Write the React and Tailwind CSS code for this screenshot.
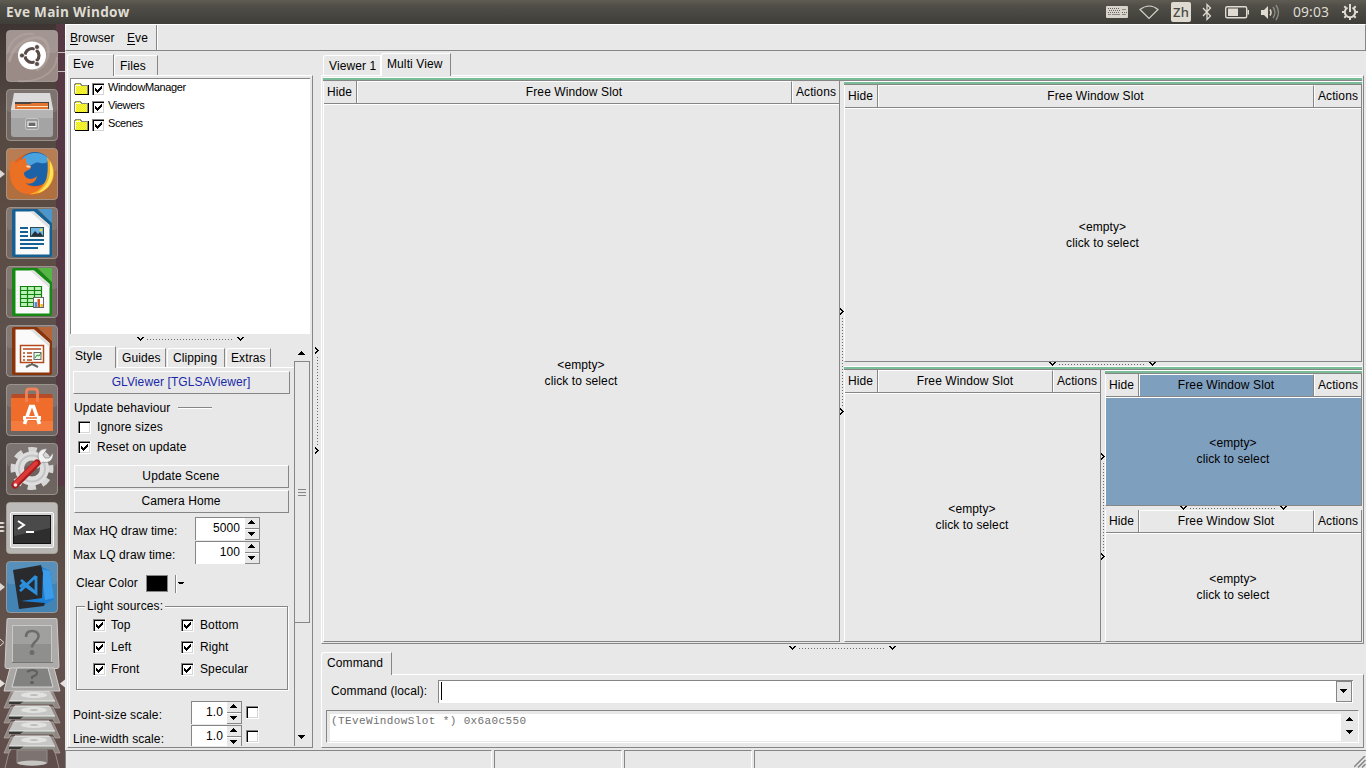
import React from "react";

const GRAY = "border-[#868686]";

/* ---------- small glyphs ---------- */

function ChevronDown() {
  return (
    <svg width="8" height="5" viewBox="0 0 8 5" shapeRendering="crispEdges">
      <path d="M0 0h2v1h1v1h1v-1h1v-1h2v1h-1v1h-1v1h-1v1h-1v-1h-1v-1h-1v-1h-1z" fill="#000" />
    </svg>
  );
}

function ChevronRight() {
  return (
    <svg width="4" height="8" viewBox="0 0 4 8" className="shrink-0" shapeRendering="crispEdges">
      <path d="M0 0h1v1h1v1h1v1h1v1h-1v1h-1v1h-1v1h-1v-2h1v-1h1v-1h-1v-1h-1z" fill="#000" />
    </svg>
  );
}

function Triangle({ up = false, small = false }) {
  const d = up ? "M3 0h1v1h1v1h1v1h1v1h-7v-1h1v-1h1v-1h1z" : "M0 0h7v1h-1v1h-1v1h-1v1h-1v-1h-1v-1h-1v-1h-1z";
  return (
    <svg width={small ? 6 : 7} height={small ? 3 : 4} viewBox="0 0 7 4" preserveAspectRatio="none" shapeRendering="crispEdges" className="shrink-0">
      <path d={d} fill="#000" />
    </svg>
  );
}

/* Horizontal splitter grip: two chevrons joined by a dotted line */
function HGrip() {
  return (
    <div className="flex h-[5px] w-[108px] items-start">
      <ChevronDown />
      <svg width="92" height="5" shapeRendering="crispEdges">
        <path d="M2 2.500H89" stroke="#6a6a6a" strokeDasharray="1 2" />
      </svg>
      <ChevronDown />
    </div>
  );
}

function VGrip() {
  return (
    <div className="flex h-[108px] w-[4px] flex-col">
      <ChevronRight />
      <svg width="4" height="92" shapeRendering="crispEdges">
        <path d="M2.500 2V90" stroke="#6a6a6a" strokeDasharray="1 2" />
      </svg>
      <ChevronRight />
    </div>
  );
}

function Check({ on = false }) {
  return (
    <span className="flex h-[13px] w-[13px] shrink-0 border-b border-r border-white">
      <span className="flex h-[12px] w-[12px] border-l border-t border-[#868686]">
        <span className="flex h-[11px] w-[11px] border-l border-t border-black bg-white">
          <span className="flex h-[10px] w-[10px] border-b border-r border-[#d5d5d5]">
            {on && (
              <svg width="9" height="9" viewBox="0 0 9 9" shapeRendering="crispEdges">
                <path d="M1 3h1v1h1v1h1v-1h1v-1h1v-1h1v-1h1v3h-1v1h-1v1h-1v1h-1v1h-1v-1h-1v-1h-1z" fill="#000" />
              </svg>
            )}
          </span>
        </span>
      </span>
    </span>
  );
}

function Folder() {
  return (
    <svg width="16" height="14" viewBox="0 0 16 14" shapeRendering="crispEdges">
      <defs>
        <pattern id="dither" width="2" height="2" patternUnits="userSpaceOnUse">
          <path d="M0 0h2v2h-2z" fill="#ffff00" />
          <path d="M0 0h1v1h-1zM1 1h1v1h-1z" fill="#e4e05a" />
        </pattern>
      </defs>
      <path d="M14.500 3v9.500H1" stroke="#000" fill="none" />
      <path d="M0 3h1V2h1V1h5v1h1v1h6v9H0z" fill="url(#dither)" />
      <path d="M.500 12V2.500h1v-1h5v1h1v1h6V12" stroke="#8a8a78" fill="none" />
      <path d="M1.500 11V3.500H7" stroke="#fdfdd8" fill="none" />
    </svg>
  );
}

/* ---------- window slots ---------- */

function GreenBar() {
  return <div className="h-[4px] w-full shrink-0 border-b border-t border-b-[#868686] border-t-white bg-[#7abb98]" />;
}

function Slot({ active = false, className = "" }) {
  const bg = active ? "bg-[#7f9fbf]" : "bg-[#e8e8e8]";
  return (
    <div className={"flex min-h-0 flex-col border-b border-l border-r border-b-[#868686] border-l-white border-r-[#868686] " + className}>
      <div className={"flex h-[23px] shrink-0 border-b leading-[22px] " + GRAY}>
        <div className={"w-[33px] border-r pl-[3px] " + GRAY}>Hide</div>
        <div className={"flex-1 border-l border-r border-t border-l-white border-r-[#868686] border-t-white pr-px text-center leading-[20px] " + bg}>Free Window Slot</div>
        <div className="w-[47px] border-l border-white text-center">Actions</div>
      </div>
      <div className={"flex flex-1 flex-col items-center justify-center border-t border-white pb-px pr-px text-center leading-[16px] " + bg}>
        <div>&lt;empty&gt;</div>
        <div>click to select</div>
      </div>
    </div>
  );
}

/* ---------- left panel controls ---------- */

function Button({ children, className = "" }) {
  return (
    <div className={"flex h-[23px] items-center justify-center border border-b-[#868686] border-l-white border-r-[#868686] border-t-white pb-[2px] pr-px " + className}>
      {children}
    </div>
  );
}

function Tab({ children, className = "" }) {
  return (
    <div className={"shrink-0 rounded-tl-[3px] border-l border-r border-t border-l-white border-r-[#868686] border-t-white bg-[#e8e8e8] " + className}>
      {children}
    </div>
  );
}

function Spinner({ value, entry }) {
  return (
    <div className="flex h-[23px]">
      <div className={"border-l border-t bg-white text-right leading-[20px] " + GRAY + " " + entry}>{value}</div>
      <div className={"flex w-[15px] flex-col border-r border-t " + GRAY}>
        <div className={"flex h-[11px] justify-center border-b pr-px pt-[2px] " + GRAY}><Triangle up /></div>
        <div className="flex h-[11px] justify-center border-b border-t border-b-[#868686] border-t-white pr-px pt-[2px]"><Triangle /></div>
      </div>
    </div>
  );
}

function Option({ on, children, className = "" }) {
  return (
    <div className={"flex items-center " + className}>
      <Check on={on} />
      <span className="ml-[6px]">{children}</span>
    </div>
  );
}

function StylePage() {
  return (
    <div className="h-[379px] w-[225px] overflow-hidden border-l border-t border-white pl-[3px] pt-[3px]">
      <Button className="w-[217px] text-[#1a28a8]">GLViewer [TGLSAViewer]</Button>
      <div className="mt-[5px] flex h-[18px] items-center pl-px">
        <span className="w-[104px]">Update behaviour</span>
        <span className="h-[2px] w-[34px] border-b border-t border-b-white border-t-[#868686]" />
      </div>
      <Option className="h-[20px] pl-[5px]">Ignore sizes</Option>
      <Option on className="h-[20px] pl-[5px]">Reset on update</Option>
      <Button className="ml-px mt-[8px] w-[215px]">Update Scene</Button>
      <Button className="ml-px mt-[2px] w-[215px]">Camera Home</Button>
      <div className="mt-[4px] flex">
        <span className="w-[122px] pt-[6px]">Max HQ draw time:</span>
        <Spinner value="5000" entry="w-[50px] pr-[5px]" />
      </div>
      <div className="mt-px flex">
        <span className="w-[122px] pt-[6px]">Max LQ draw time:</span>
        <Spinner value="100" entry="w-[50px] pr-[5px]" />
      </div>
      <div className="mt-[10px] flex h-[19px] items-center pl-[3px]">
        <span className="w-[70px] pb-[2px]">Clear Color</span>
        <span className={"h-[17px] w-[22px] border bg-black " + GRAY} />
        <span className="ml-[7px] h-[18px] w-[2px] border-l border-r border-l-[#868686] border-r-white" />
        <span className="ml-px flex"><Triangle small /></span>
      </div>
      <div className="relative ml-[3px] mt-[13px] h-[84px] w-[212px] border border-[#868686] pt-[7px] shadow-[1px_1px_0_white,inset_1px_1px_0_white]">
        <span className="absolute -top-[8px] left-[8px] whitespace-nowrap bg-[#e8e8e8] px-[2px] leading-[14px]">Light sources:</span>
        {[["Top", "Bottom"], ["Left", "Right"], ["Front", "Specular"]].map(([a, b]) => (
          <div key={a} className="flex h-[22px] pl-[16px]">
            <Option on className="w-[88px] [&>span:last-child]:ml-[5px]">{a}</Option>
            <Option on>{b}</Option>
          </div>
        ))}
      </div>
      {["Point-size scale:", "Line-width scale:"].map((label, i) => (
        <div key={label} className={i ? "mt-px flex" : "mt-[11px] flex"}>
          <span className="w-[118px] pt-[6px]">{label}</span>
          <Spinner value="1.0" entry="w-[36px] pr-[4px]" />
          <span className="ml-[4px] mt-[5px]"><Check /></span>
        </div>
      ))}
    </div>
  );
}

function LeftPanel() {
  return (
    <div className="flex w-[248px] shrink-0 flex-col pl-[2px] pt-[3px]">
      <div className="flex h-[21px] items-end">
        <Tab className="z-10 -mb-px h-[22px] w-[47px] pl-[5px] leading-[18px]">Eve</Tab>
        <Tab className="h-[20px] w-[44px] pl-[5px] leading-[20px]">Files</Tab>
      </div>
      <div className="h-[673px] w-[246px] border border-b-[#868686] border-l-white border-r-[#868686] border-t-white pl-[2px] pt-[2px]">
        <div className={"h-[256px] w-[240px] border-l border-t bg-white " + GRAY}>
          {["WindowManager", "Viewers", "Scenes"].map((t) => (
            <div key={t} className="flex h-[18px] pl-[3px] text-[11px] leading-[17px] tracking-[-0.36px]">
              <span className="mt-[3px]"><Folder /></span>
              <span className="ml-[2px] mt-[4px]"><Check on /></span>
              <span className="ml-[3px]">{t}</span>
            </div>
          ))}
        </div>
        <div className="flex h-[12px] justify-center pt-[3px]"><HGrip /></div>
        <div className="-ml-px flex h-[400px]">
          <div className="w-[225px]">
            <div className="flex h-[21px] items-end">
              <Tab className="z-10 -mb-px h-[22px] w-[47px] pl-[5px] leading-[19px]">Style</Tab>
              <Tab className="ml-px h-[19px] w-[49px] pl-[4px] leading-[18px]">Guides</Tab>
              <Tab className="ml-px h-[19px] w-[58px] pl-[5px] leading-[18px]">Clipping</Tab>
              <Tab className="ml-px h-[19px] w-[45px] pl-[4px] leading-[18px]">Extras</Tab>
            </div>
            <StylePage />
          </div>
          <div className="flex w-[16px] flex-col items-center">
            <div className="flex h-[15px] w-full justify-center pr-px pt-[5px]"><Triangle up /></div>
            <div className={"flex h-[262px] w-full flex-col items-center justify-center gap-[2px] border " + GRAY}>
              <span className="h-px w-[8px] bg-[#868686]" />
              <span className="h-px w-[8px] bg-[#868686]" />
              <span className="h-px w-[8px] bg-[#868686]" />
            </div>
            <div className={"flex w-full flex-1 items-end justify-center border-l pb-[7px] pr-[2px] " + GRAY}><Triangle /></div>
          </div>
        </div>
      </div>
    </div>
  );
}

/* ---------- right side ---------- */

function MultiView() {
  return (
    <div className="h-[569px] w-[1043px] border border-b-[#868686] border-l-white border-r-[#868686] border-t-white pl-px pr-px pt-px">
      <GreenBar />
      <div className="flex h-[561px]">
        <Slot className="w-[517px] shrink-0" />
        <div className="flex w-[4px] shrink-0 items-start pt-[227px]"><VGrip /></div>
        <div className="flex w-[519px] flex-col pr-px">
          <GreenBar />
          <Slot className="h-[277px]" />
          <div className="flex h-[4px] justify-center"><HGrip /></div>
          <GreenBar />
          <div className="flex h-[272px]">
            <Slot className="w-[257px]" />
            <div className="flex w-[4px] shrink-0 items-start pt-[83px]"><VGrip /></div>
            <div className="flex w-[257px] flex-col">
              <GreenBar />
              <Slot active className="h-[132px]" />
              <div className="flex h-[4px] justify-center"><HGrip /></div>
              <Slot className="h-[132px]" />
            </div>
          </div>
        </div>
      </div>
    </div>
  );
}

function CommandPanel() {
  return (
    <div>
      <div className="flex h-[22px] items-end">
        <Tab className="z-10 -mb-px h-[23px] w-[71px] pl-[5px] leading-[21px]">Command</Tab>
      </div>
      <div className="h-[74px] w-[1043px] border border-b-[#868686] border-l-white border-r-[#868686] border-t-white pl-[4px] pt-[5px]">
        <div className="flex h-[23px]">
          <span className="w-[112px] pl-[5px] leading-[22px]">Command (local):</span>
          <div className={"flex w-[915px] border-l border-t bg-white pl-[2px] pt-px " + GRAY}>
            <span className="h-[18px] w-px bg-black" />
            <span className="flex-1" />
            <span className={"-mt-px mr-px flex h-[21px] w-[16px] items-center justify-center border bg-[#e8e8e8] pb-px pr-px " + GRAY}><Triangle /></span>
          </div>
        </div>
        <div className="mt-[7px] flex h-[33px] w-[1033px] border border-b-white border-l-[#868686] border-r-white border-t-[#868686] pl-[3px] pt-[3px]">
          <div className="h-[27px] w-[1011px] bg-white pl-px font-['Liberation_Mono',monospace] text-[11px] leading-[15px] tracking-[0.38px] text-[#707070]">
            (TEveWindowSlot *) 0x6a0c550
          </div>
          <div className="flex flex-1 flex-col items-center gap-[9px] pr-px pt-[3px]">
            <Triangle up />
            <Triangle />
          </div>
        </div>
      </div>
    </div>
  );
}

/* ---------- launcher ---------- */

function Tile({ fill = "#8d847f", fillOpacity = 0.5, pip, children }) {
  return (
    <svg width="65" height="59" viewBox="0 0 65 59" className="block shrink-0">
      <rect x="6.500" y=".500" width="51" height="51" rx="3.500" fill={fill} fillOpacity={fillOpacity} stroke="#b9b0aa" strokeOpacity=".65" />
      <rect x="7" y="1" width="50" height="22" rx="3" fill="#fff" fillOpacity=".1" />
      {pip === "one" && <path d="M0 22l5 4-5 4z" fill="#ddd8d4" />}
      {pip === "three" && <path d="M0 20h3l2 1-2 1H0zM0 24h3l2 1-2 1H0zM0 28h3l2 1-2 1H0z" fill="#ddd8d4" />}
      {children}
    </svg>
  );
}

function DocShape({ color, corner, children }) {
  return (
    <>
      <path d="M14 2h23l15 14v32a2 2 0 0 1-2 2H14a2 2 0 0 1-2-2V4a2 2 0 0 1 2-2z" fill={color} />
      <path d="M38 2h14v14z" fill={corner} />
      <path d="M15.500 4.500H34L49.500 18v29.500h-34z" fill="#fafafa" />
      <path d="M34 4.500L49.500 18v4L30 4.500z" fill="#dfdfdf" />
      {children}
    </>
  );
}

function Disk({ y }) {
  return (
    <g>
      <path d={`M11 ${y}H53L60 ${y + 16}h-5l-2-4H11l-2 4H4z`} fill="#8f8581" stroke="#b5aba7" strokeOpacity=".7" />
      <path d={`M14 ${y - 1}h36l5 10H9z`} fill="#c6c6c5" />
      <path d={`M15 ${y - 1}h34`} stroke="#efefee" />
      <ellipse cx="34" cy={y + 3} rx="13" ry="3" fill="#e2e2e1" />
      <ellipse cx="34" cy={y + 3} rx="4" ry="1" fill="#bdbdbc" />
      <path d={`M9 ${y + 9}h46v3H9z`} fill="#363634" />
      <path d={`M24 ${y + 9}h31v3H20z`} fill="#90928c" />
      <path d={`M9 ${y + 9}h46`} stroke="#ececea" />
    </g>
  );
}

function Launcher() {
  return (
    <div className="flex w-[65px] shrink-0 flex-col overflow-hidden bg-[linear-gradient(180deg,#3e3532_0%,#544943_12%,#5b4b42_25%,#5d514d_42%,#4a4340_60%,#5f4f48_74%,#64534e_84%,#5f4d4b_100%)]">
      <div className="flex h-[744px] flex-col bg-[linear-gradient(90deg,transparent_56px,#553844_56px)] bg-[length:100%_462px] bg-no-repeat pt-[6px]">
        <Tile fill="#a3948f" fillOpacity={0.9}>
          <path d="M9 32C14 10 38 2 46 12c6 10 0 24-10 28" stroke="#b8aba5" strokeWidth="3" fill="none" opacity=".6" />
          <path d="M18 51c20 2 38-8 39-24M7 24C11 8 22 3 34 4" stroke="#b8aba5" strokeWidth="2" fill="none" opacity=".5" />
          <circle cx="32" cy="25.500" r="14" fill="#fff" />
          <circle cx="32" cy="25.500" r="7" fill="none" stroke="#594b47" strokeWidth="3.200" />
          <path d="M32 25.500L20 25.500M32 25.500L38 15M32 25.500L38 36" stroke="#fff" strokeWidth="1.500" />
          <circle cx="32" cy="25.500" r="4.800" fill="#fff" />
          <g fill="#594b47" stroke="#fff" strokeWidth=".8"><circle cx="22" cy="25.500" r="2.500" /><circle cx="37" cy="17" r="2.500" /><circle cx="37" cy="34" r="2.500" /></g>
          <path d="M58 22.500h7M58 41.500h7" stroke="#c8c0bd" />
        </Tile>
        <Tile>
          <path d="M14 4h36l3 16H11z" fill="#dadada" />
          <path d="M15 13h34v8H15z" fill="#494542" />
          <path d="M15 15h15l2-1h16v7H15z" fill="#e4752f" />
          <path d="M17 17h31v1H17z" fill="#ffe4c3" />
          <path d="M11 20h42v25q0 3-3 3H14q-3 0-3-3z" fill="#a4a4a4" />
          <path d="M11 20h42v9H11z" fill="#b4b4b4" />
          <path d="M11 20.500h42" stroke="#dcdcdc" />
          <rect x="25.500" y="29.500" width="13" height="11" rx="2" fill="#999" stroke="#c9c9c9" />
          <rect x="28" y="33" width="8" height="4.500" fill="#6a6a6a" stroke="#fff" />
        </Tile>
        <Tile fill="#b5713f" fillOpacity={0.95} pip="one">
          <circle cx="32" cy="26" r="21" fill="#e4601d" />
          <circle cx="35" cy="21" r="17" fill="#1c62a8" />
          <path d="M21 12c5-8 20-10 27-2 1 5-4 6-8 5-6-2-8 4-12 2z" fill="#4aa3df" />
          <path d="M47 9c8 8 9 20 3 28-5 7-13 10-21 9 10-3 17-10 18-18 1-6 1-12 0-19z" fill="#f3a92a" />
          <path d="M50 13c4 8 4 16 0 23-3 5-8 8-13 9 8-5 12-12 13-20z" fill="#ffe45c" />
          <path d="M12 12l4 3c3-3 6-4 10-5 0 3 0 5 2 7 3 0 4 2 2 4-3 2-6 2-6 5 1 5 8 7 13 2-1 7-7 9-12 7 4 5 12 6 18 2-5 8-14 10-20 8-12-4-16-18-11-33z" fill="#ec7023" />
          <path d="M26 18c2-1 4 0 5 1-2 1-4 1-5-1z" fill="#f8e0c8" />
        </Tile>
        <Tile>
          <DocShape color="#156092" corner="#4b96ca">
            <path d="M20 21h8M20 25h8M20 29h8M20 33h24M20 37h24M20 41h18" stroke="#156092" strokeWidth="1.800" />
            <rect x="30.500" y="20.500" width="13" height="9" fill="#6db6e8" stroke="#2d4a55" />
            <path d="M31 29l4-5 3 3 2-2 3 4z" fill="#27313a" /><circle cx="41" cy="23" r="1.500" fill="#e8d348" />
          </DocShape>
        </Tile>
        <Tile>
          <DocShape color="#158a12" corner="#52b743">
            <path d="M20 20h22v20H20z" fill="#baf2b5" />
            <path d="M20.500 20.500h21v20h-21zM20 24.500h22M20 28.500h22M20 32.500h22M20 36.500h22M27.500 20v20M34.500 20v20" stroke="#148012" fill="none" strokeWidth="1.200" />
            <rect x="33.500" y="31.500" width="10" height="10" fill="#fff" stroke="#666" />
            <path d="M34.500 36h2.500v5h-2.500z" fill="#4093d4" /><path d="M37.500 33h2.500v8h-2.500z" fill="#d65321" /><path d="M40.500 38h2.500v3h-2.500z" fill="#f2bd22" />
          </DocShape>
        </Tile>
        <Tile>
          <DocShape color="#8c3409" corner="#b96437">
            <rect x="20.500" y="20.500" width="23" height="17" fill="#fff" stroke="#b4491b" strokeWidth="1.500" />
            <path d="M23 24h18M23 28h2M23 31.500h2M23 35h2M27 28h5M27 31.500h5M27 35h5" stroke="#b4491b" strokeWidth="1.700" />
            <rect x="34" y="27.500" width="7" height="7" fill="#e9f7e9" stroke="#666" /><path d="M35 33l2-3 2 1 2-3" stroke="#27992a" fill="none" />
            <path d="M32 38v2M32 39l-6 3M32 39l6 3" stroke="#666" strokeWidth="2" />
          </DocShape>
        </Tile>
        <Tile>
          <path d="M12 10h40l1 5H11z" fill="#b64b25" />
          <path d="M11 14h42v33H11z" fill="#ef6c2b" />
          <path d="M11 37h42v10H11z" fill="#f47b3d" />
          <path d="M26.500 18V8q0-3 3-3h5q3 0 3 3v10" stroke="#ee8259" strokeWidth="2.800" fill="none" />
          <path d="M24.500 40l6-17.500h3l6 17.500" stroke="#fff" strokeWidth="3.600" fill="none" />
          <path d="M23 32h18v4H23z" fill="#fff" /><path d="M26 34h11" stroke="#ef6c2b" strokeWidth="1.500" />
        </Tile>
        <Tile>
          <circle cx="32" cy="25.500" r="18" fill="none" stroke="#d6d6d6" strokeWidth="7" strokeDasharray="8 6.140" strokeDashoffset="4" />
          <circle cx="32" cy="25.500" r="12.500" fill="none" stroke="#dedede" strokeWidth="9" />
          <circle cx="32" cy="25.500" r="13" fill="none" stroke="#c4c4c4" strokeWidth="2" />
          <path d="M36 24l6-7" stroke="#d8d8d8" strokeWidth="5" />
          <path d="M39 17c-3-7 2-12 8-11l-4 6 2 3 4 0 4-5c1 7-5 11-10 9l-3 2z" fill="#f2f2f2" stroke="#777" strokeWidth=".6" />
          <path d="M15 42L37 20" stroke="#a41c1c" strokeWidth="7" strokeLinecap="round" />
          <path d="M15 41L36 20" stroke="#dc3938" strokeWidth="4" strokeLinecap="round" />
          <circle cx="15.500" cy="42" r="1.800" fill="#eee" />
        </Tile>
        <Tile fill="#bcbab8" fillOpacity={0.95} pip="three">
          <rect x="10.500" y="10.500" width="43" height="35" rx="1.500" fill="#d2d2d2" stroke="#f8f8f8" />
          <rect x="13.500" y="13.500" width="37" height="28" fill="#2e2e2e" stroke="#111" />
          <path d="M14 14h36v12L14 34z" fill="#666" opacity=".5" />
          <path d="M18 19l6 4-6 4" stroke="#fff" strokeWidth="2" fill="none" /><path d="M26 30h8" stroke="#fff" strokeWidth="2" />
        </Tile>
        <Tile fill="#4484b4" fillOpacity={1} pip="one">
          <path d="M40 5l10 5 4 28-11 7-22-6 17-2z" fill="#1d7fd4" />
          <path d="M41 8l9 2 4 27-9 2z" fill="#3b9cec" />
          <path d="M13 9l28-5 2 8-1 25-21 3 24 2-1 3-25 3z" fill="#282a2e" />
          <path d="M36 15v17l-13-9-3 3M36 15L20 30M36 32L21 19" stroke="#2b8fdd" strokeWidth="2.800" fill="none" />
        </Tile>
        <svg width="65" height="148" viewBox="0 620 65 148" className="block shrink-0" overflow="visible">
          <path d="M8 618.500h48q1 0 1 1l2 47q0 2-2 2H7q-2 0-2-2l2-47q0-1 1-1z" fill="#adabaa" stroke="#cdcbc9" />
          <rect x="12.500" y="625.500" width="39" height="37" fill="#8f8f8e" stroke="#c9c9c8" />
          <path d="M13 626h38v18H13z" fill="#a0a09f" />
          <path d="M12 662.500h41" stroke="#747472" />
          <path d="M26 637q0-6 6-6 6.500 0 6.500 5.500c0 5-6.500 5-6.500 11" stroke="#6c6c6a" strokeWidth="2.600" fill="none" />
          <circle cx="32" cy="652.500" r="2.500" fill="#6c6c6a" />
          {[692, 707, 722, 737].map((y) => <Disk key={y} y={y} />)}
          <path d="M10 668h44l6 23H4z" fill="#a8a6a4" stroke="#cfccc9" />
          <path d="M17 668h31l5 19H12z" fill="#828281" stroke="#d5d5d3" />
          <path d="M27 672q6-4 10 0 1 3-5 5v2" stroke="#5f5f5e" strokeWidth="2" fill="none" /><ellipse cx="32" cy="682.500" rx="2" ry="1.500" fill="#5f5f5e" />
          <path d="M9 752l-4 16M55 752l4 16" stroke="#998d89" />
          <path d="M17 750h30v13q-15 5-30 0z" fill="#7d7471" stroke="#968d89" />
          <ellipse cx="32" cy="763" rx="14.500" ry="2.500" fill="#c6c6c3" />
          <path d="M0 639l4 3.500-4 3.500" stroke="#ddd8d4" fill="none" />
          <path d="M0 679.500l5 4-5 4zM65 679.500l-5 4 5 4z" fill="#e6e1de" />
        </svg>
      </div>
    </div>
  );
}

/* ---------- top bar ---------- */

function TopBar() {
  return (
    <div className="flex h-[24px] shrink-0 items-center bg-[linear-gradient(180deg,#5f5c53_0%,#504e47_25%,#3e3d38_100%)] pl-[6px] font-['Open_Sans','Noto_Sans',sans-serif] text-[#dfdbd2]">
      <span className="flex-1 text-[13.600px] font-bold leading-[24px] tracking-[0.28px]">Eve Main Window</span>
      <svg width="260" height="24" viewBox="1106 0 260 24" className="shrink-0">
        <rect x="1106" y="6" width="22" height="12" rx="1" fill="#d8d4cb" />
        <path d="M1108 8.500h12M1109 10.500h12M1108 12.500h12M1122 12.500h5" stroke="#69665f" strokeDasharray="1 1" />
        <path d="M1108 14.500h3M1112 14.500h8M1122 14.500h4M1122 9.500h4" stroke="#8b887f" />
        <path d="M1140 9.500q9.500-7 18 0L1149 18.500z" fill="none" stroke="#d4d0c7" strokeWidth="1.200" />
        <rect x="1171" y="2" width="20" height="20" rx="2" fill="#dfdbd2" />
        <text x="1181" y="17" textAnchor="middle" fontSize="13" fontWeight="500" fill="#4a4842" className="font-['Noto_Sans',sans-serif]">Zh</text>
        <path d="M1203 8l7.500 8-3.500 3.500V4.500l3.500 3.500-7.500 8" fill="none" stroke="#dfdbd2" strokeWidth="1.300" />
        <rect x="1225.700" y="6.700" width="21" height="11" rx="1.500" fill="none" stroke="#dfdbd2" strokeWidth="1.400" />
        <path d="M1228 8.500h10v7.500h-10zM1247.500 10h1.500v4.500h-1.500z" fill="#dfdbd2" />
        <path d="M1261 10h3l4-4v13l-4-4h-3z" fill="#dfdbd2" />
        <path d="M1270 9.500q2 3 0 6" stroke="#dfdbd2" strokeWidth="1.500" fill="none" />
        <path d="M1273 7q4 5.500 0 11M1276 5q5 7.500 0 15" stroke="#8d8a82" strokeWidth="1.500" fill="none" />
        <text x="1293" y="17" fontSize="13.500" textLength="36" lengthAdjust="spacingAndGlyphs" fill="#dfdbd2" className="font-['Noto_Sans',sans-serif]">09:03</text>
        <path d="M1347.500 7.600a5.200 5.200 0 1 0 5 0" fill="none" stroke="#dfdbd2" strokeWidth="2" />
        <path d="M1350 4v8M1344.300 12h-2.300M1355.700 12h2.300M1346 16l-1.700 1.700M1354 16l1.700 1.700M1346 8l-1.700-1.700M1354 8l1.700-1.700M1350 17.500v2.500" stroke="#dfdbd2" strokeWidth="2" />
      </svg>
    </div>
  );
}

export default function App() {
  return (
    <div className="flex h-[768px] w-[1366px] flex-col overflow-hidden bg-[#e8e8e8] font-['Liberation_Sans',Arial,sans-serif] text-[12px] leading-[16px] tracking-[0.1px] text-black">
      <TopBar />
      <div className="flex h-[744px]">
        <Launcher />
        <div className="flex w-[1301px] flex-col">
          <div className="flex h-[27px] shrink-0 border border-b-[#868686] border-l-white border-r-[#868686] border-t-white leading-[26px]">
            <div className={"flex w-[91px] border-r pl-[4px] " + GRAY}>
              <span className="w-[57px]"><u className="underline-offset-2">B</u>rowser</span>
              <span><u className="underline-offset-2">E</u>ve</span>
            </div>
            <div className="flex-1 border-l border-white" />
          </div>
          <div className="flex h-[698px] shrink-0">
            <LeftPanel />
            <div className="flex w-[8px] shrink-0 justify-end pr-[2px] pt-[296px]"><VGrip /></div>
            <div className="w-[1043px]">
              <div className="flex h-[24px] items-end">
                <Tab className="ml-[2px] h-[20px] w-[58px] border-r-white pl-[5px] leading-[20px]">Viewer 1</Tab>
                <Tab className="z-10 -mb-px h-[23px] w-[70px] pl-[5px] leading-[20px]">Multi View</Tab>
              </div>
              <MultiView />
              <div className="flex h-[8px] justify-center pt-[2px]"><HGrip /></div>
              <CommandPanel />
            </div>
          </div>
          <div className="flex h-[19px] shrink-0 gap-[2px] pt-px">
            <div className="w-[427px] border-l border-r border-t border-l-[#868686] border-r-white border-t-[#868686]" />
            <div className="w-[128px] border-l border-r border-t border-l-[#868686] border-r-white border-t-[#868686]" />
            <div className="w-[128px] border-l border-r border-t border-l-[#868686] border-r-white border-t-[#868686]" />
            <div className={"flex flex-1 items-end justify-end border-l border-t " + GRAY}>
              <svg width="12" height="12" viewBox="0 0 12 12">
                <path d="M0 11L11 0M4 11.500L11.500 4M8 11.500L11.500 8" stroke="#868686" strokeWidth="1.500" />
              </svg>
            </div>
          </div>
        </div>
      </div>
    </div>
  );
}
